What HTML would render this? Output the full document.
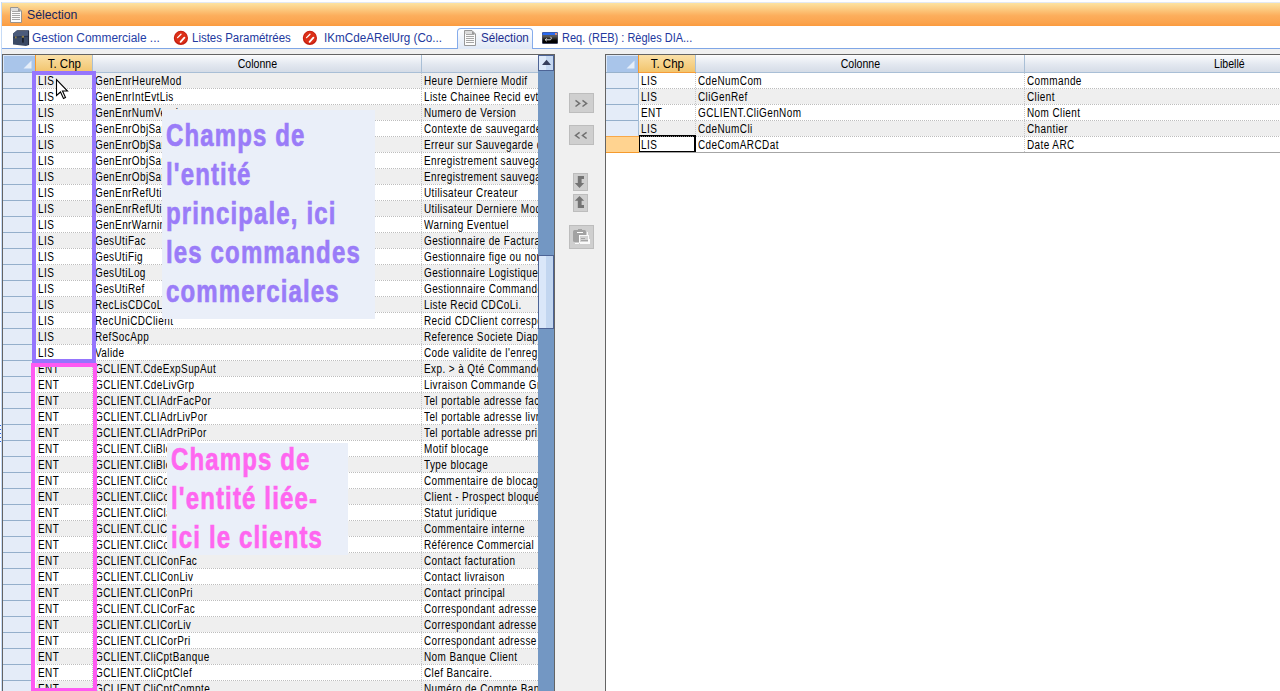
<!DOCTYPE html><html><head><meta charset="utf-8"><style>
*{margin:0;padding:0;box-sizing:border-box}
html,body{width:1280px;height:691px;overflow:hidden;background:#f0f0f0;font-family:"Liberation Sans",sans-serif;position:relative}
.a{position:absolute}
.gt{position:absolute;font-size:12px;line-height:16px;color:#000;white-space:nowrap;transform-origin:0 0;transform:scaleX(0.83);letter-spacing:0.5px;-webkit-font-smoothing:antialiased}
.gt div{height:16px}
.hd{position:absolute;font-size:12px;color:#000;white-space:nowrap;line-height:16px}
.tab{position:absolute;font-size:12px;line-height:16px;white-space:nowrap;transform-origin:0 0}
</style></head><body><div class="a" style="left:0;top:0;width:1280px;height:2px;background:#fff"></div>
<div class="a" style="left:0;top:2px;width:1280px;height:1px;background:#e3e9f1"></div>
<div class="a" style="left:1px;top:2px;width:1px;height:689px;background:#c6dbf6"></div>
<div class="a" style="left:0;top:0;width:1px;height:691px;background:#fff"></div>
<div class="a" style="left:0;top:425px;width:1px;height:1px;background:#2a62e0"></div>
<div class="a" style="left:0;top:429px;width:1px;height:1px;background:#2a62e0"></div>
<div class="a" style="left:0;top:433px;width:1px;height:1px;background:#2a62e0"></div>
<div class="a" style="left:0;top:437px;width:1px;height:1px;background:#2a62e0"></div>
<div class="a" style="left:0;top:441px;width:1px;height:1px;background:#2a62e0"></div>
<div class="a" style="left:2px;top:3px;width:1278px;height:23px;background:linear-gradient(#fde3a0 0%,#fcc77c 30%,#fcae5c 55%,#fba44e 85%,#fb9b3f 100%)"></div>
<div class="a" style="left:2px;top:26px;width:1278px;height:22px;background:#fff"></div>
<div class="a" style="left:2px;top:48px;width:1278px;height:1px;background:#7fa6e6"></div>
<div class="a" style="left:2px;top:54px;width:553px;height:639px;border:1px solid #646464;background:#fff"></div>
<div class="a" style="left:3px;top:55px;width:535px;height:17px;background:linear-gradient(#fefefe 0,#f5f7fa 12%,#e3e8f0 55%,#d5dce7 100%)"></div>
<div class="a" style="left:3px;top:72px;width:535px;height:1px;background:#a9bfd6"></div>
<div class="a" style="left:3px;top:55px;width:32px;height:17px;background:#a9c5ea"></div>
<div class="a" style="left:34px;top:55px;width:1px;height:17px;background:#9dc2f2"></div>
<svg class="a" style="left:23px;top:60px" width="9" height="9"><polygon points="8.5,0.5 8.5,8.5 0.5,8.5" fill="#e6eef9"/></svg>
<div class="a" style="left:3px;top:72px;width:32px;height:1px;background:#98b2cc"></div>
<div class="a" style="left:35px;top:55px;width:57px;height:17px;background:linear-gradient(#fae0a8,#f2c46c);border-left:1px solid #f79a2e"></div>
<div class="a" style="left:92px;top:55px;width:1px;height:17px;background:#a9bfd6"></div>
<div class="a" style="left:3px;top:55px;width:32px;height:1px;background:#dce8f8"></div>
<div class="a" style="left:3px;top:55px;width:1px;height:17px;background:#dce8f8"></div>
<div class="a" style="left:421px;top:55px;width:1px;height:17px;background:#a9bfd6"></div>
<div class="hd" style="left:36px;top:56px;width:57px;text-align:center"><span style="display:inline-block;transform:scaleX(0.96)">T. Chp</span></div>
<div class="hd" style="left:93px;top:56px;width:328px;text-align:center"><span style="display:inline-block;transform:scaleX(0.88)">Colonne</span></div>
<div class="a" style="left:3px;top:73px;width:29px;height:15px;background:#e4ecf8"></div>
<div class="a" style="left:3px;top:88px;width:29px;height:1px;background:#94afcb"></div>
<div class="a" style="left:32px;top:73px;width:3px;height:16px;background:#e4ecf8"></div>
<div class="a" style="left:36px;top:73px;width:502px;height:15px;background:#efefef"></div>
<div class="a" style="left:36px;top:88px;width:502px;height:1px;background:repeating-linear-gradient(90deg,transparent 0 1px,#bdbdbd 1px 2px)"></div>
<div class="a" style="left:3px;top:89px;width:29px;height:15px;background:#e4ecf8"></div>
<div class="a" style="left:3px;top:104px;width:29px;height:1px;background:#94afcb"></div>
<div class="a" style="left:32px;top:89px;width:3px;height:16px;background:#e4ecf8"></div>
<div class="a" style="left:36px;top:89px;width:502px;height:15px;background:#ffffff"></div>
<div class="a" style="left:36px;top:104px;width:502px;height:1px;background:repeating-linear-gradient(90deg,transparent 0 1px,#bdbdbd 1px 2px)"></div>
<div class="a" style="left:3px;top:105px;width:29px;height:15px;background:#e4ecf8"></div>
<div class="a" style="left:3px;top:120px;width:29px;height:1px;background:#94afcb"></div>
<div class="a" style="left:32px;top:105px;width:3px;height:16px;background:#e4ecf8"></div>
<div class="a" style="left:36px;top:105px;width:502px;height:15px;background:#efefef"></div>
<div class="a" style="left:36px;top:120px;width:502px;height:1px;background:repeating-linear-gradient(90deg,transparent 0 1px,#bdbdbd 1px 2px)"></div>
<div class="a" style="left:3px;top:121px;width:29px;height:15px;background:#e4ecf8"></div>
<div class="a" style="left:3px;top:136px;width:29px;height:1px;background:#94afcb"></div>
<div class="a" style="left:32px;top:121px;width:3px;height:16px;background:#e4ecf8"></div>
<div class="a" style="left:36px;top:121px;width:502px;height:15px;background:#ffffff"></div>
<div class="a" style="left:36px;top:136px;width:502px;height:1px;background:repeating-linear-gradient(90deg,transparent 0 1px,#bdbdbd 1px 2px)"></div>
<div class="a" style="left:3px;top:137px;width:29px;height:15px;background:#e4ecf8"></div>
<div class="a" style="left:3px;top:152px;width:29px;height:1px;background:#94afcb"></div>
<div class="a" style="left:32px;top:137px;width:3px;height:16px;background:#e4ecf8"></div>
<div class="a" style="left:36px;top:137px;width:502px;height:15px;background:#efefef"></div>
<div class="a" style="left:36px;top:152px;width:502px;height:1px;background:repeating-linear-gradient(90deg,transparent 0 1px,#bdbdbd 1px 2px)"></div>
<div class="a" style="left:3px;top:153px;width:29px;height:15px;background:#e4ecf8"></div>
<div class="a" style="left:3px;top:168px;width:29px;height:1px;background:#94afcb"></div>
<div class="a" style="left:32px;top:153px;width:3px;height:16px;background:#e4ecf8"></div>
<div class="a" style="left:36px;top:153px;width:502px;height:15px;background:#ffffff"></div>
<div class="a" style="left:36px;top:168px;width:502px;height:1px;background:repeating-linear-gradient(90deg,transparent 0 1px,#bdbdbd 1px 2px)"></div>
<div class="a" style="left:3px;top:169px;width:29px;height:15px;background:#e4ecf8"></div>
<div class="a" style="left:3px;top:184px;width:29px;height:1px;background:#94afcb"></div>
<div class="a" style="left:32px;top:169px;width:3px;height:16px;background:#e4ecf8"></div>
<div class="a" style="left:36px;top:169px;width:502px;height:15px;background:#efefef"></div>
<div class="a" style="left:36px;top:184px;width:502px;height:1px;background:repeating-linear-gradient(90deg,transparent 0 1px,#bdbdbd 1px 2px)"></div>
<div class="a" style="left:3px;top:185px;width:29px;height:15px;background:#e4ecf8"></div>
<div class="a" style="left:3px;top:200px;width:29px;height:1px;background:#94afcb"></div>
<div class="a" style="left:32px;top:185px;width:3px;height:16px;background:#e4ecf8"></div>
<div class="a" style="left:36px;top:185px;width:502px;height:15px;background:#ffffff"></div>
<div class="a" style="left:36px;top:200px;width:502px;height:1px;background:repeating-linear-gradient(90deg,transparent 0 1px,#bdbdbd 1px 2px)"></div>
<div class="a" style="left:3px;top:201px;width:29px;height:15px;background:#e4ecf8"></div>
<div class="a" style="left:3px;top:216px;width:29px;height:1px;background:#94afcb"></div>
<div class="a" style="left:32px;top:201px;width:3px;height:16px;background:#e4ecf8"></div>
<div class="a" style="left:36px;top:201px;width:502px;height:15px;background:#efefef"></div>
<div class="a" style="left:36px;top:216px;width:502px;height:1px;background:repeating-linear-gradient(90deg,transparent 0 1px,#bdbdbd 1px 2px)"></div>
<div class="a" style="left:3px;top:217px;width:29px;height:15px;background:#e4ecf8"></div>
<div class="a" style="left:3px;top:232px;width:29px;height:1px;background:#94afcb"></div>
<div class="a" style="left:32px;top:217px;width:3px;height:16px;background:#e4ecf8"></div>
<div class="a" style="left:36px;top:217px;width:502px;height:15px;background:#ffffff"></div>
<div class="a" style="left:36px;top:232px;width:502px;height:1px;background:repeating-linear-gradient(90deg,transparent 0 1px,#bdbdbd 1px 2px)"></div>
<div class="a" style="left:3px;top:233px;width:29px;height:15px;background:#e4ecf8"></div>
<div class="a" style="left:3px;top:248px;width:29px;height:1px;background:#94afcb"></div>
<div class="a" style="left:32px;top:233px;width:3px;height:16px;background:#e4ecf8"></div>
<div class="a" style="left:36px;top:233px;width:502px;height:15px;background:#efefef"></div>
<div class="a" style="left:36px;top:248px;width:502px;height:1px;background:repeating-linear-gradient(90deg,transparent 0 1px,#bdbdbd 1px 2px)"></div>
<div class="a" style="left:3px;top:249px;width:29px;height:15px;background:#e4ecf8"></div>
<div class="a" style="left:3px;top:264px;width:29px;height:1px;background:#94afcb"></div>
<div class="a" style="left:32px;top:249px;width:3px;height:16px;background:#e4ecf8"></div>
<div class="a" style="left:36px;top:249px;width:502px;height:15px;background:#ffffff"></div>
<div class="a" style="left:36px;top:264px;width:502px;height:1px;background:repeating-linear-gradient(90deg,transparent 0 1px,#bdbdbd 1px 2px)"></div>
<div class="a" style="left:3px;top:265px;width:29px;height:15px;background:#e4ecf8"></div>
<div class="a" style="left:3px;top:280px;width:29px;height:1px;background:#94afcb"></div>
<div class="a" style="left:32px;top:265px;width:3px;height:16px;background:#e4ecf8"></div>
<div class="a" style="left:36px;top:265px;width:502px;height:15px;background:#efefef"></div>
<div class="a" style="left:36px;top:280px;width:502px;height:1px;background:repeating-linear-gradient(90deg,transparent 0 1px,#bdbdbd 1px 2px)"></div>
<div class="a" style="left:3px;top:281px;width:29px;height:15px;background:#e4ecf8"></div>
<div class="a" style="left:3px;top:296px;width:29px;height:1px;background:#94afcb"></div>
<div class="a" style="left:32px;top:281px;width:3px;height:16px;background:#e4ecf8"></div>
<div class="a" style="left:36px;top:281px;width:502px;height:15px;background:#ffffff"></div>
<div class="a" style="left:36px;top:296px;width:502px;height:1px;background:repeating-linear-gradient(90deg,transparent 0 1px,#bdbdbd 1px 2px)"></div>
<div class="a" style="left:3px;top:297px;width:29px;height:15px;background:#e4ecf8"></div>
<div class="a" style="left:3px;top:312px;width:29px;height:1px;background:#94afcb"></div>
<div class="a" style="left:32px;top:297px;width:3px;height:16px;background:#e4ecf8"></div>
<div class="a" style="left:36px;top:297px;width:502px;height:15px;background:#efefef"></div>
<div class="a" style="left:36px;top:312px;width:502px;height:1px;background:repeating-linear-gradient(90deg,transparent 0 1px,#bdbdbd 1px 2px)"></div>
<div class="a" style="left:3px;top:313px;width:29px;height:15px;background:#e4ecf8"></div>
<div class="a" style="left:3px;top:328px;width:29px;height:1px;background:#94afcb"></div>
<div class="a" style="left:32px;top:313px;width:3px;height:16px;background:#e4ecf8"></div>
<div class="a" style="left:36px;top:313px;width:502px;height:15px;background:#ffffff"></div>
<div class="a" style="left:36px;top:328px;width:502px;height:1px;background:repeating-linear-gradient(90deg,transparent 0 1px,#bdbdbd 1px 2px)"></div>
<div class="a" style="left:3px;top:329px;width:29px;height:15px;background:#e4ecf8"></div>
<div class="a" style="left:3px;top:344px;width:29px;height:1px;background:#94afcb"></div>
<div class="a" style="left:32px;top:329px;width:3px;height:16px;background:#e4ecf8"></div>
<div class="a" style="left:36px;top:329px;width:502px;height:15px;background:#efefef"></div>
<div class="a" style="left:36px;top:344px;width:502px;height:1px;background:repeating-linear-gradient(90deg,transparent 0 1px,#bdbdbd 1px 2px)"></div>
<div class="a" style="left:3px;top:345px;width:29px;height:15px;background:#e4ecf8"></div>
<div class="a" style="left:3px;top:360px;width:29px;height:1px;background:#94afcb"></div>
<div class="a" style="left:32px;top:345px;width:3px;height:16px;background:#e4ecf8"></div>
<div class="a" style="left:36px;top:345px;width:502px;height:15px;background:#ffffff"></div>
<div class="a" style="left:36px;top:360px;width:502px;height:1px;background:repeating-linear-gradient(90deg,transparent 0 1px,#bdbdbd 1px 2px)"></div>
<div class="a" style="left:3px;top:361px;width:29px;height:15px;background:#e4ecf8"></div>
<div class="a" style="left:3px;top:376px;width:29px;height:1px;background:#94afcb"></div>
<div class="a" style="left:32px;top:361px;width:3px;height:16px;background:#e4ecf8"></div>
<div class="a" style="left:36px;top:361px;width:502px;height:15px;background:#efefef"></div>
<div class="a" style="left:36px;top:376px;width:502px;height:1px;background:repeating-linear-gradient(90deg,transparent 0 1px,#bdbdbd 1px 2px)"></div>
<div class="a" style="left:3px;top:377px;width:29px;height:15px;background:#e4ecf8"></div>
<div class="a" style="left:3px;top:392px;width:29px;height:1px;background:#94afcb"></div>
<div class="a" style="left:32px;top:377px;width:3px;height:16px;background:#e4ecf8"></div>
<div class="a" style="left:36px;top:377px;width:502px;height:15px;background:#ffffff"></div>
<div class="a" style="left:36px;top:392px;width:502px;height:1px;background:repeating-linear-gradient(90deg,transparent 0 1px,#bdbdbd 1px 2px)"></div>
<div class="a" style="left:3px;top:393px;width:29px;height:15px;background:#e4ecf8"></div>
<div class="a" style="left:3px;top:408px;width:29px;height:1px;background:#94afcb"></div>
<div class="a" style="left:32px;top:393px;width:3px;height:16px;background:#e4ecf8"></div>
<div class="a" style="left:36px;top:393px;width:502px;height:15px;background:#efefef"></div>
<div class="a" style="left:36px;top:408px;width:502px;height:1px;background:repeating-linear-gradient(90deg,transparent 0 1px,#bdbdbd 1px 2px)"></div>
<div class="a" style="left:3px;top:409px;width:29px;height:15px;background:#e4ecf8"></div>
<div class="a" style="left:3px;top:424px;width:29px;height:1px;background:#94afcb"></div>
<div class="a" style="left:32px;top:409px;width:3px;height:16px;background:#e4ecf8"></div>
<div class="a" style="left:36px;top:409px;width:502px;height:15px;background:#ffffff"></div>
<div class="a" style="left:36px;top:424px;width:502px;height:1px;background:repeating-linear-gradient(90deg,transparent 0 1px,#bdbdbd 1px 2px)"></div>
<div class="a" style="left:3px;top:425px;width:29px;height:15px;background:#e4ecf8"></div>
<div class="a" style="left:3px;top:440px;width:29px;height:1px;background:#94afcb"></div>
<div class="a" style="left:32px;top:425px;width:3px;height:16px;background:#e4ecf8"></div>
<div class="a" style="left:36px;top:425px;width:502px;height:15px;background:#efefef"></div>
<div class="a" style="left:36px;top:440px;width:502px;height:1px;background:repeating-linear-gradient(90deg,transparent 0 1px,#bdbdbd 1px 2px)"></div>
<div class="a" style="left:3px;top:441px;width:29px;height:15px;background:#e4ecf8"></div>
<div class="a" style="left:3px;top:456px;width:29px;height:1px;background:#94afcb"></div>
<div class="a" style="left:32px;top:441px;width:3px;height:16px;background:#e4ecf8"></div>
<div class="a" style="left:36px;top:441px;width:502px;height:15px;background:#ffffff"></div>
<div class="a" style="left:36px;top:456px;width:502px;height:1px;background:repeating-linear-gradient(90deg,transparent 0 1px,#bdbdbd 1px 2px)"></div>
<div class="a" style="left:3px;top:457px;width:29px;height:15px;background:#e4ecf8"></div>
<div class="a" style="left:3px;top:472px;width:29px;height:1px;background:#94afcb"></div>
<div class="a" style="left:32px;top:457px;width:3px;height:16px;background:#e4ecf8"></div>
<div class="a" style="left:36px;top:457px;width:502px;height:15px;background:#efefef"></div>
<div class="a" style="left:36px;top:472px;width:502px;height:1px;background:repeating-linear-gradient(90deg,transparent 0 1px,#bdbdbd 1px 2px)"></div>
<div class="a" style="left:3px;top:473px;width:29px;height:15px;background:#e4ecf8"></div>
<div class="a" style="left:3px;top:488px;width:29px;height:1px;background:#94afcb"></div>
<div class="a" style="left:32px;top:473px;width:3px;height:16px;background:#e4ecf8"></div>
<div class="a" style="left:36px;top:473px;width:502px;height:15px;background:#ffffff"></div>
<div class="a" style="left:36px;top:488px;width:502px;height:1px;background:repeating-linear-gradient(90deg,transparent 0 1px,#bdbdbd 1px 2px)"></div>
<div class="a" style="left:3px;top:489px;width:29px;height:15px;background:#e4ecf8"></div>
<div class="a" style="left:3px;top:504px;width:29px;height:1px;background:#94afcb"></div>
<div class="a" style="left:32px;top:489px;width:3px;height:16px;background:#e4ecf8"></div>
<div class="a" style="left:36px;top:489px;width:502px;height:15px;background:#efefef"></div>
<div class="a" style="left:36px;top:504px;width:502px;height:1px;background:repeating-linear-gradient(90deg,transparent 0 1px,#bdbdbd 1px 2px)"></div>
<div class="a" style="left:3px;top:505px;width:29px;height:15px;background:#e4ecf8"></div>
<div class="a" style="left:3px;top:520px;width:29px;height:1px;background:#94afcb"></div>
<div class="a" style="left:32px;top:505px;width:3px;height:16px;background:#e4ecf8"></div>
<div class="a" style="left:36px;top:505px;width:502px;height:15px;background:#ffffff"></div>
<div class="a" style="left:36px;top:520px;width:502px;height:1px;background:repeating-linear-gradient(90deg,transparent 0 1px,#bdbdbd 1px 2px)"></div>
<div class="a" style="left:3px;top:521px;width:29px;height:15px;background:#e4ecf8"></div>
<div class="a" style="left:3px;top:536px;width:29px;height:1px;background:#94afcb"></div>
<div class="a" style="left:32px;top:521px;width:3px;height:16px;background:#e4ecf8"></div>
<div class="a" style="left:36px;top:521px;width:502px;height:15px;background:#efefef"></div>
<div class="a" style="left:36px;top:536px;width:502px;height:1px;background:repeating-linear-gradient(90deg,transparent 0 1px,#bdbdbd 1px 2px)"></div>
<div class="a" style="left:3px;top:537px;width:29px;height:15px;background:#e4ecf8"></div>
<div class="a" style="left:3px;top:552px;width:29px;height:1px;background:#94afcb"></div>
<div class="a" style="left:32px;top:537px;width:3px;height:16px;background:#e4ecf8"></div>
<div class="a" style="left:36px;top:537px;width:502px;height:15px;background:#ffffff"></div>
<div class="a" style="left:36px;top:552px;width:502px;height:1px;background:repeating-linear-gradient(90deg,transparent 0 1px,#bdbdbd 1px 2px)"></div>
<div class="a" style="left:3px;top:553px;width:29px;height:15px;background:#e4ecf8"></div>
<div class="a" style="left:3px;top:568px;width:29px;height:1px;background:#94afcb"></div>
<div class="a" style="left:32px;top:553px;width:3px;height:16px;background:#e4ecf8"></div>
<div class="a" style="left:36px;top:553px;width:502px;height:15px;background:#efefef"></div>
<div class="a" style="left:36px;top:568px;width:502px;height:1px;background:repeating-linear-gradient(90deg,transparent 0 1px,#bdbdbd 1px 2px)"></div>
<div class="a" style="left:3px;top:569px;width:29px;height:15px;background:#e4ecf8"></div>
<div class="a" style="left:3px;top:584px;width:29px;height:1px;background:#94afcb"></div>
<div class="a" style="left:32px;top:569px;width:3px;height:16px;background:#e4ecf8"></div>
<div class="a" style="left:36px;top:569px;width:502px;height:15px;background:#ffffff"></div>
<div class="a" style="left:36px;top:584px;width:502px;height:1px;background:repeating-linear-gradient(90deg,transparent 0 1px,#bdbdbd 1px 2px)"></div>
<div class="a" style="left:3px;top:585px;width:29px;height:15px;background:#e4ecf8"></div>
<div class="a" style="left:3px;top:600px;width:29px;height:1px;background:#94afcb"></div>
<div class="a" style="left:32px;top:585px;width:3px;height:16px;background:#e4ecf8"></div>
<div class="a" style="left:36px;top:585px;width:502px;height:15px;background:#efefef"></div>
<div class="a" style="left:36px;top:600px;width:502px;height:1px;background:repeating-linear-gradient(90deg,transparent 0 1px,#bdbdbd 1px 2px)"></div>
<div class="a" style="left:3px;top:601px;width:29px;height:15px;background:#e4ecf8"></div>
<div class="a" style="left:3px;top:616px;width:29px;height:1px;background:#94afcb"></div>
<div class="a" style="left:32px;top:601px;width:3px;height:16px;background:#e4ecf8"></div>
<div class="a" style="left:36px;top:601px;width:502px;height:15px;background:#ffffff"></div>
<div class="a" style="left:36px;top:616px;width:502px;height:1px;background:repeating-linear-gradient(90deg,transparent 0 1px,#bdbdbd 1px 2px)"></div>
<div class="a" style="left:3px;top:617px;width:29px;height:15px;background:#e4ecf8"></div>
<div class="a" style="left:3px;top:632px;width:29px;height:1px;background:#94afcb"></div>
<div class="a" style="left:32px;top:617px;width:3px;height:16px;background:#e4ecf8"></div>
<div class="a" style="left:36px;top:617px;width:502px;height:15px;background:#efefef"></div>
<div class="a" style="left:36px;top:632px;width:502px;height:1px;background:repeating-linear-gradient(90deg,transparent 0 1px,#bdbdbd 1px 2px)"></div>
<div class="a" style="left:3px;top:633px;width:29px;height:15px;background:#e4ecf8"></div>
<div class="a" style="left:3px;top:648px;width:29px;height:1px;background:#94afcb"></div>
<div class="a" style="left:32px;top:633px;width:3px;height:16px;background:#e4ecf8"></div>
<div class="a" style="left:36px;top:633px;width:502px;height:15px;background:#ffffff"></div>
<div class="a" style="left:36px;top:648px;width:502px;height:1px;background:repeating-linear-gradient(90deg,transparent 0 1px,#bdbdbd 1px 2px)"></div>
<div class="a" style="left:3px;top:649px;width:29px;height:15px;background:#e4ecf8"></div>
<div class="a" style="left:3px;top:664px;width:29px;height:1px;background:#94afcb"></div>
<div class="a" style="left:32px;top:649px;width:3px;height:16px;background:#e4ecf8"></div>
<div class="a" style="left:36px;top:649px;width:502px;height:15px;background:#efefef"></div>
<div class="a" style="left:36px;top:664px;width:502px;height:1px;background:repeating-linear-gradient(90deg,transparent 0 1px,#bdbdbd 1px 2px)"></div>
<div class="a" style="left:3px;top:665px;width:29px;height:15px;background:#e4ecf8"></div>
<div class="a" style="left:3px;top:680px;width:29px;height:1px;background:#94afcb"></div>
<div class="a" style="left:32px;top:665px;width:3px;height:16px;background:#e4ecf8"></div>
<div class="a" style="left:36px;top:665px;width:502px;height:15px;background:#ffffff"></div>
<div class="a" style="left:36px;top:680px;width:502px;height:1px;background:repeating-linear-gradient(90deg,transparent 0 1px,#bdbdbd 1px 2px)"></div>
<div class="a" style="left:3px;top:681px;width:29px;height:15px;background:#e4ecf8"></div>
<div class="a" style="left:3px;top:696px;width:29px;height:1px;background:#94afcb"></div>
<div class="a" style="left:32px;top:681px;width:3px;height:16px;background:#e4ecf8"></div>
<div class="a" style="left:36px;top:681px;width:502px;height:15px;background:#efefef"></div>
<div class="a" style="left:36px;top:696px;width:502px;height:1px;background:repeating-linear-gradient(90deg,transparent 0 1px,#bdbdbd 1px 2px)"></div>
<div class="a" style="left:92px;top:73px;width:1px;height:620px;background:repeating-linear-gradient(180deg,#c8c8c8 0 1px,transparent 1px 2px)"></div>
<div class="a" style="left:421px;top:73px;width:1px;height:620px;background:repeating-linear-gradient(180deg,#c8c8c8 0 1px,transparent 1px 2px)"></div>
<div class="a" style="left:36px;top:73px;width:56px;height:624px;overflow:hidden"><div class="gt" style="left:2px;top:0"><div>LIS</div><div>LIS</div><div>LIS</div><div>LIS</div><div>LIS</div><div>LIS</div><div>LIS</div><div>LIS</div><div>LIS</div><div>LIS</div><div>LIS</div><div>LIS</div><div>LIS</div><div>LIS</div><div>LIS</div><div>LIS</div><div>LIS</div><div>LIS</div><div>ENT</div><div>ENT</div><div>ENT</div><div>ENT</div><div>ENT</div><div>ENT</div><div>ENT</div><div>ENT</div><div>ENT</div><div>ENT</div><div>ENT</div><div>ENT</div><div>ENT</div><div>ENT</div><div>ENT</div><div>ENT</div><div>ENT</div><div>ENT</div><div>ENT</div><div>ENT</div><div>ENT</div></div></div>
<div class="a" style="left:93px;top:73px;width:328px;height:624px;overflow:hidden"><div class="gt" style="left:2px;top:0"><div>GenEnrHeureMod</div><div>GenEnrIntEvtLis</div><div>GenEnrNumVersion</div><div>GenEnrObjSauvegarde</div><div>GenEnrObjSauvErreur</div><div>GenEnrObjSauvEnr</div><div>GenEnrObjSauvEnrBis</div><div>GenEnrRefUtiCre</div><div>GenEnrRefUtiMod</div><div>GenEnrWarning</div><div>GesUtiFac</div><div>GesUtiFig</div><div>GesUtiLog</div><div>GesUtiRef</div><div>RecLisCDCoLi</div><div>RecUniCDClient</div><div>RefSocApp</div><div>Valide</div><div>GCLIENT.CdeExpSupAut</div><div>GCLIENT.CdeLivGrp</div><div>GCLIENT.CLIAdrFacPor</div><div>GCLIENT.CLIAdrLivPor</div><div>GCLIENT.CLIAdrPriPor</div><div>GCLIENT.CliBloMot</div><div>GCLIENT.CliBloTyp</div><div>GCLIENT.CliComBlo</div><div>GCLIENT.CliCodBlo</div><div>GCLIENT.CliClaJur</div><div>GCLIENT.CLICom</div><div>GCLIENT.CliComRef</div><div>GCLIENT.CLIConFac</div><div>GCLIENT.CLIConLiv</div><div>GCLIENT.CLIConPri</div><div>GCLIENT.CLICorFac</div><div>GCLIENT.CLICorLiv</div><div>GCLIENT.CLICorPri</div><div>GCLIENT.CliCptBanque</div><div>GCLIENT.CliCptClef</div><div>GCLIENT.CliCptCompte</div></div></div>
<div class="a" style="left:422px;top:73px;width:116px;height:624px;overflow:hidden"><div class="gt" style="left:2px;top:0"><div>Heure Derniere Modif</div><div>Liste Chainee Recid evt</div><div>Numero de Version</div><div>Contexte de sauvegarde</div><div>Erreur sur Sauvegarde de l'objet</div><div>Enregistrement sauvegarde</div><div>Enregistrement sauvegarde</div><div>Utilisateur Createur</div><div>Utilisateur Derniere Modif</div><div>Warning Eventuel</div><div>Gestionnaire de Facturation</div><div>Gestionnaire fige ou non</div><div>Gestionnaire Logistique</div><div>Gestionnaire Commande</div><div>Liste Recid CDCoLi.</div><div>Recid CDClient correspondant</div><div>Reference Societe Diapason</div><div>Code validite de l'enregistrement</div><div>Exp. &gt; à Qté Commandée</div><div>Livraison Commande Groupee</div><div>Tel portable adresse facturation</div><div>Tel portable adresse livraison</div><div>Tel portable adresse principale</div><div>Motif blocage</div><div>Type blocage</div><div>Commentaire de blocage</div><div>Client - Prospect bloqué</div><div>Statut juridique</div><div>Commentaire interne</div><div>Référence Commercial</div><div>Contact facturation</div><div>Contact livraison</div><div>Contact principal</div><div>Correspondant adresse facturation</div><div>Correspondant adresse livraison</div><div>Correspondant adresse principale</div><div>Nom Banque Client</div><div>Clef Bancaire.</div><div>Numéro de Compte Bancaire</div></div></div>
<div class="a" style="left:538px;top:55px;width:16px;height:636px;background:#7397c3"></div>
<div class="a" style="left:538px;top:55px;width:16px;height:16px;background:linear-gradient(90deg,#dde9f9 0 50%,#c5d8f1 50%);border:1px solid #4d6496"></div>
<svg class="a" style="left:540px;top:58px" width="13" height="9"><polygon points="6.5,1.8 11,7 2,7" fill="#363f5c"/></svg>
<div class="a" style="left:538px;top:255px;width:16px;height:74px;background:linear-gradient(90deg,#dae7f9 0 50%,#c2d6f0 50%);border:1px solid #4d6496"></div>
<div class="a" style="left:554px;top:54px;width:1px;height:637px;background:#646464"></div>
<div class="a" style="left:569px;top:93px;width:25px;height:20px;background:#cfcfcf;border:1px solid #bdbdbd"></div>
<svg class="a" style="left:569px;top:93px" width="25" height="20"><path d="M6.5 7.3 L10.6 10.4 L6.5 13.5 M13.5 7.3 L17.6 10.4 L13.5 13.5" stroke="#717171" stroke-width="1.5" fill="none"/></svg>
<div class="a" style="left:569px;top:125px;width:25px;height:20px;background:#cfcfcf;border:1px solid #bdbdbd"></div>
<svg class="a" style="left:569px;top:125px" width="25" height="20"><path d="M10.6 7.3 L6.5 10.4 L10.6 13.5 M17.6 7.3 L13.5 10.4 L17.6 13.5" stroke="#717171" stroke-width="1.5" fill="none"/></svg>
<div class="a" style="left:573px;top:173px;width:15px;height:18px;background:#cfcfcf;border:1px solid #bdbdbd"></div>
<svg class="a" style="left:573px;top:173px" width="15" height="18"><path d="M4.8 3 H11 V6 H8.6 V10 H11.2 L6.5 15 L1.8 10 H4.8 Z" fill="#747474"/></svg>
<div class="a" style="left:573px;top:194px;width:15px;height:18px;background:#cfcfcf;border:1px solid #bdbdbd"></div>
<svg class="a" style="left:573px;top:194px" width="15" height="18"><path d="M6.5 2 L11.2 6.8 H8.6 V11 H11 V14 H4.8 V6.8 H1.8 Z" fill="#747474"/></svg>
<div class="a" style="left:569px;top:225px;width:25px;height:24px;background:#cfcfcf;border:1px solid #bdbdbd"></div>
<svg class="a" style="left:569px;top:225px" width="25" height="24"><rect x="4" y="5" width="13" height="12" rx="1.5" fill="#a2a2a2"/><rect x="9" y="4" width="4" height="2" fill="#a2a2a2"/><rect x="8" y="7" width="6" height="1" fill="#fff"/><rect x="18" y="7" width="1" height="4" fill="#fafafa"/><rect x="10.5" y="10.5" width="9" height="7" fill="#d2d2d2" stroke="#fafafa"/><path d="M12 13.5 H16 M12 15.5 H19" stroke="#a4a4a4"/><rect x="6" y="18" width="4" height="1" fill="#fafafa"/><rect x="11" y="18" width="10" height="1" fill="#fafafa"/><rect x="20" y="14" width="1" height="5" fill="#fafafa"/></svg>
<div class="a" style="left:605px;top:54px;width:677px;height:640px;border:1px solid #646464;background:#fff"></div>
<div class="a" style="left:606px;top:55px;width:674px;height:17px;background:linear-gradient(#fefefe 0,#f5f7fa 12%,#e3e8f0 55%,#d5dce7 100%)"></div>
<div class="a" style="left:606px;top:72px;width:674px;height:1px;background:#a9bfd6"></div>
<div class="a" style="left:606px;top:55px;width:32px;height:17px;background:#a9c5ea"></div>
<div class="a" style="left:637px;top:55px;width:1px;height:17px;background:#9dc2f2"></div>
<svg class="a" style="left:626px;top:60px" width="9" height="9"><polygon points="8.5,0.5 8.5,8.5 0.5,8.5" fill="#e6eef9"/></svg>
<div class="a" style="left:606px;top:72px;width:32px;height:1px;background:#98b2cc"></div>
<div class="a" style="left:638px;top:55px;width:57px;height:17px;background:linear-gradient(#fae0a8,#f2c46c);border-left:1px solid #f79a2e"></div>
<div class="a" style="left:695px;top:55px;width:1px;height:17px;background:#a9bfd6"></div>
<div class="a" style="left:638px;top:72px;width:58px;height:1px;background:#f59c38"></div>
<div class="a" style="left:606px;top:55px;width:32px;height:1px;background:#dce8f8"></div>
<div class="a" style="left:606px;top:55px;width:1px;height:17px;background:#dce8f8"></div>
<div class="a" style="left:1024px;top:55px;width:1px;height:17px;background:#a9bfd6"></div>
<div class="hd" style="left:639px;top:56px;width:57px;text-align:center"><span style="display:inline-block;transform:scaleX(0.96)">T. Chp</span></div>
<div class="hd" style="left:696px;top:56px;width:328px;text-align:center"><span style="display:inline-block;transform:scaleX(0.88)">Colonne</span></div>
<div class="hd" style="left:1025px;top:56px;width:408px;text-align:center"><span style="display:inline-block;transform:scaleX(0.88)">Libellé</span></div>
<div class="a" style="left:606px;top:73px;width:32px;height:15px;background:#e4ecf8"></div>
<div class="a" style="left:606px;top:88px;width:32px;height:1px;background:#94afcb"></div>
<div class="a" style="left:639px;top:73px;width:641px;height:15px;background:#ffffff"></div>
<div class="a" style="left:639px;top:88px;width:641px;height:1px;background:repeating-linear-gradient(90deg,transparent 0 1px,#bdbdbd 1px 2px)"></div>
<div class="a" style="left:606px;top:89px;width:32px;height:15px;background:#e4ecf8"></div>
<div class="a" style="left:606px;top:104px;width:32px;height:1px;background:#94afcb"></div>
<div class="a" style="left:639px;top:89px;width:641px;height:15px;background:#efefef"></div>
<div class="a" style="left:639px;top:104px;width:641px;height:1px;background:repeating-linear-gradient(90deg,transparent 0 1px,#bdbdbd 1px 2px)"></div>
<div class="a" style="left:606px;top:105px;width:32px;height:15px;background:#e4ecf8"></div>
<div class="a" style="left:606px;top:120px;width:32px;height:1px;background:#94afcb"></div>
<div class="a" style="left:639px;top:105px;width:641px;height:15px;background:#ffffff"></div>
<div class="a" style="left:639px;top:120px;width:641px;height:1px;background:repeating-linear-gradient(90deg,transparent 0 1px,#bdbdbd 1px 2px)"></div>
<div class="a" style="left:606px;top:121px;width:32px;height:15px;background:#e4ecf8"></div>
<div class="a" style="left:606px;top:136px;width:32px;height:1px;background:#94afcb"></div>
<div class="a" style="left:639px;top:121px;width:641px;height:15px;background:#efefef"></div>
<div class="a" style="left:639px;top:136px;width:641px;height:1px;background:repeating-linear-gradient(90deg,transparent 0 1px,#bdbdbd 1px 2px)"></div>
<div class="a" style="left:606px;top:136px;width:33px;height:17px;background:#ffd390;border-top:1px solid #f8a848;border-bottom:1px solid #f59a2c"></div>
<div class="a" style="left:639px;top:137px;width:641px;height:15px;background:#ffffff"></div>
<div class="a" style="left:639px;top:152px;width:641px;height:1px;background:#a6a6a6"></div>
<div class="a" style="left:638px;top:73px;width:1px;height:63px;background:#a3bdd8"></div>
<div class="a" style="left:695px;top:73px;width:1px;height:79px;background:repeating-linear-gradient(180deg,#c8c8c8 0 1px,transparent 1px 2px)"></div>
<div class="a" style="left:1024px;top:73px;width:1px;height:79px;background:repeating-linear-gradient(180deg,#c8c8c8 0 1px,transparent 1px 2px)"></div>
<div class="a" style="left:639px;top:135px;width:57px;height:17px;border:2px solid #000;border-left-width:1px;border-bottom-width:1px"></div>
<div class="a" style="left:640px;top:136px;width:54px;height:1px;background:repeating-linear-gradient(90deg,#fff 0 1px,transparent 1px 2px);opacity:.5"></div>
<div class="a" style="left:639px;top:73px;width:56px;height:80px;overflow:hidden"><div class="gt" style="left:2px;top:0"><div>LIS</div><div>LIS</div><div>ENT</div><div>LIS</div><div>LIS</div></div></div>
<div class="a" style="left:696px;top:73px;width:328px;height:80px;overflow:hidden"><div class="gt" style="left:2px;top:0"><div>CdeNumCom</div><div>CliGenRef</div><div>GCLIENT.CliGenNom</div><div>CdeNumCli</div><div>CdeComARCDat</div></div></div>
<div class="a" style="left:1025px;top:73px;width:255px;height:80px;overflow:hidden"><div class="gt" style="left:2px;top:0"><div>Commande</div><div>Client</div><div>Nom Client</div><div>Chantier</div><div>Date ARC</div></div></div>
<div class="a" style="left:32px;top:71px;width:64px;height:292px;border:4px solid #9575fd"></div>
<div class="a" style="left:31px;top:363px;width:66px;height:329px;border:4px solid #ff5af2"></div>
<div class="a" style="left:162px;top:110px;width:213px;height:209px;background:#eaeff9"></div>
<div class="a" style="left:167px;top:443px;width:181px;height:112px;background:#eaeff9"></div>
<div class="a" style="left:166px;top:116px;color:#9a7cf8;font-weight:bold;font-size:31px;line-height:39px;letter-spacing:1.5px;-webkit-text-stroke:0.7px currentColor;white-space:nowrap;transform-origin:0 0;transform:scaleX(0.773)">Champs de<br>l'entité<br>principale, ici<br>les commandes<br>commerciales</div>
<div class="a" style="left:171px;top:440px;color:#ff66f0;font-weight:bold;font-size:31px;line-height:39px;letter-spacing:1.5px;-webkit-text-stroke:0.7px currentColor;white-space:nowrap;transform-origin:0 0;transform:scaleX(0.773)">Champs de<br>l'entité liée-<br>ici le clients</div>
<svg class="a" style="left:10px;top:7px" width="13" height="17"><path d="M0.5 0.5 H8 L11.5 4 V15.5 H0.5 Z" fill="#fcfcfc" stroke="#8c8c8c" stroke-width="0.9"/><rect x="1" y="1" width="7" height="3" fill="#dcdcdc"/><path d="M8 0.8 L11.2 4 H8 Z" fill="#9a9a9a"/><path d="M2 4.5 H10.5 M2 6.5 H10 M2 8.5 H10 M2 10.5 H10 M2 12.5 H10" stroke="#9c9c9c" stroke-width="0.9"/></svg>
<div class="tab" style="left:27px;top:7px;color:#15255e;font-size:12.5px;transform:scaleX(0.98)">Sélection</div>
<div class="a" style="left:457px;top:28px;width:76px;height:21px;border:1px solid #86aceb;border-bottom:none;border-radius:4px 4px 0 0;background:linear-gradient(#ffffff,#dfe8f6)"></div>
<svg class="a" style="left:464px;top:30px" width="13" height="17"><path d="M0.5 0.5 H8 L11.5 4 V15.5 H0.5 Z" fill="#fcfcfc" stroke="#8c8c8c" stroke-width="0.9"/><rect x="1" y="1" width="7" height="3" fill="#dcdcdc"/><path d="M8 0.8 L11.2 4 H8 Z" fill="#9a9a9a"/><path d="M2 4.5 H10.5 M2 6.5 H10 M2 8.5 H10 M2 10.5 H10 M2 12.5 H10" stroke="#9c9c9c" stroke-width="0.9"/></svg>
<div class="tab" style="left:481px;top:30px;color:#1c2e90;font-size:12.5px;transform:scaleX(0.93)">Sélection</div>
<svg class="a" style="left:13px;top:30px" width="17" height="17"><polygon points="0,3.5 4,0.3 16,0.3 16,15 13,16 0,14.5" fill="#3a4964"/><polygon points="0.3,3.6 4,0.6 15.7,0.6 15.7,6 0.3,7" fill="#4b5b7b"/><rect x="5" y="0" width="7" height="1.2" fill="#5c6270"/><path d="M0.3 7.2 L15.7 6.2" stroke="#26304a" stroke-width="0.9"/><path d="M15.6 1 V15" stroke="#222a3c" stroke-width="0.9"/><rect x="2" y="6.4" width="1.6" height="2" fill="#8c7c44"/><rect x="8.8" y="5.8" width="2.2" height="2" fill="#948246"/><rect x="9.3" y="7.8" width="1.3" height="4.8" fill="#0e1018"/></svg>
<div class="tab" style="left:32px;top:30px;color:#1f3ea8;font-size:12.5px;transform:scaleX(0.953)">Gestion Commerciale ...</div>
<svg class="a" style="left:173px;top:30px" width="16" height="16"><circle cx="7.9" cy="7.9" r="7.1" fill="#c41e10"/><circle cx="7.9" cy="7.6" r="6" fill="#dc3018"/><path d="M4.6 7.6 L8 4.2" stroke="#fff" stroke-width="1.3" stroke-linecap="round"/><path d="M7.6 11.8 L11.4 7.6" stroke="#fff" stroke-width="1.8" stroke-linecap="round"/></svg>
<div class="tab" style="left:192px;top:30px;color:#22389e;font-size:12.5px;transform:scaleX(0.918)">Listes Paramétrées</div>
<svg class="a" style="left:302px;top:30px" width="16" height="16"><circle cx="7.9" cy="7.9" r="7.1" fill="#c41e10"/><circle cx="7.9" cy="7.6" r="6" fill="#dc3018"/><path d="M4.6 7.6 L8 4.2" stroke="#fff" stroke-width="1.3" stroke-linecap="round"/><path d="M7.6 11.8 L11.4 7.6" stroke="#fff" stroke-width="1.8" stroke-linecap="round"/></svg>
<div class="tab" style="left:324px;top:30px;color:#22389e;font-size:12.5px;transform:scaleX(0.934)">IKmCdeARelUrg (Co...</div>
<svg class="a" style="left:542px;top:32px" width="16" height="12"><defs><linearGradient id="tg" x1="0" y1="0" x2="0" y2="1"><stop offset="0" stop-color="#707070"/><stop offset="0.7" stop-color="#000"/></linearGradient></defs><rect x="0.25" y="0.25" width="15.5" height="11.5" rx="1" fill="#0a0a18" stroke="#5a6aa8" stroke-width="0.5"/><rect x="0.5" y="0.5" width="15" height="2.6" fill="#2a6af2"/><rect x="13" y="1" width="2.2" height="1.8" fill="#f0906a"/><rect x="0.6" y="3.2" width="14.8" height="8" fill="url(#tg)"/><path d="M8.5 4.8 Q10.5 6 8.5 7.8 H3.2 M4.8 6.4 L3.2 7.8 L4.8 9.2" stroke="#d8d8d8" stroke-width="1" fill="none"/></svg>
<div class="tab" style="left:562px;top:30px;color:#22389e;font-size:12.5px;transform:scaleX(0.88)">Req. (REB) : Règles DIA...</div>
<svg class="a" style="left:55px;top:78px" width="16" height="22"><path d="M1.5 1.5 V17.5 L5.5 14 L8.5 20.5 L10.5 19.5 L7.5 13 H12.5 Z" fill="#fff" stroke="#000" stroke-width="1.1" stroke-linejoin="miter"/></svg></body></html>
